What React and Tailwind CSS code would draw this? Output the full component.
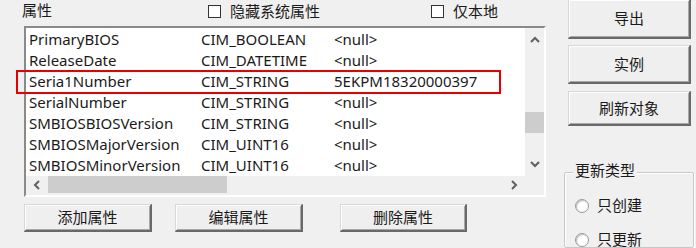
import React from "react";

const rows = [
    ["PrimaryBIOS", "CIM_BOOLEAN", "<null>"],
    ["ReleaseDate", "CIM_DATETIME", "<null>"],
    ["Seria1Number", "CIM_STRING", "5EKPM18320000397"],
    ["SerialNumber", "CIM_STRING", "<null>"],
    ["SMBIOSBIOSVersion", "CIM_STRING", "<null>"],
    ["SMBIOSMajorVersion", "CIM_UINT16", "<null>"],
    ["SMBIOSMinorVersion", "CIM_UINT16", "<null>"],
];

const font = "font-['Noto_Sans','Noto_Sans_CJK_SC',sans-serif]";

const WinButton = ({ className, children }) => (
    <div
        className={
            "flex items-center justify-center bg-[#efefef] border-t border-l border-t-[#d8d8d8] border-l-[#d8d8d8] border-r-2 border-b-2 border-r-[#696969] border-b-[#696969] shadow-[inset_1px_1px_0_#ffffff,inset_-1px_-1px_0_#a8a8a8] text-[15px] text-[#1a1a1a] " +
            className
        }
    >
        {children}
    </div>
);

const CheckBox = ({ label, className }) => (
    <div className={"flex items-center gap-[9px] " + className}>
        <div className="w-[13px] h-[13px] border border-[#333333] bg-white" />
        <span className="text-[15px] leading-none">{label}</span>
    </div>
);

const Radio = ({ label }) => (
    <div className="flex items-center gap-[8px]">
        <div className="w-[14px] h-[14px] rounded-full border border-[#9a9a9a] bg-white shadow-[inset_1px_1px_1px_#bdbdbd]" />
        <span className="text-[15px] leading-none">{label}</span>
    </div>
);

const Chevron = ({ dir }) => {
    const d = {
        up: "M1 6 L5 2 L9 6",
        down: "M1 2 L5 6 L9 2",
        left: "M6 1 L2 5 L6 9",
        right: "M2 1 L6 5 L2 9",
    }[dir];
    const vb = dir === "up" || dir === "down" ? "0 0 10 8" : "0 0 8 10";
    const size = dir === "up" || dir === "down" ? "w-[10px] h-[8px]" : "w-[8px] h-[10px]";
    return (
        <svg viewBox={vb} className={size}>
            <path d={d} fill="none" stroke="#606060" strokeWidth="2" />
        </svg>
    );
};

export default function App() {
    return (
        <div className={"relative w-[696px] h-[248px] overflow-hidden bg-[#f0f0f0] text-[#1a1a1a] flex " + font}>
            {/* left panel */}
            <div className="w-[564px] flex flex-col">
                <div className="h-[26px] flex items-center relative">
                    <span className="ml-[22px] text-[15px] leading-none -mt-[5px]">属性</span>
                    <CheckBox label="隐藏系统属性" className="ml-[156px] -mt-[4px]" />
                    <CheckBox label="仅本地" className="ml-[111px] -mt-[4px]" />
                </div>

                <div className="ml-[24px] w-[522px] h-[171px] border-2 border-t-[#8a8a8a] border-l-[#8a8a8a] border-r-white border-b-white flex flex-col">
                    <div className="flex h-[148px]">
                        <div className="flex-1 bg-white overflow-hidden pt-[1px]">
                            {rows.map((r) => (
                                <div key={r[0]} className="h-[21px] flex items-center text-[15px] whitespace-nowrap">
                                    <span className="w-[175px] pl-[3px]">{r[0]}</span>
                                    <span className="w-[133px]">{r[1]}</span>
                                    <span>{r[2]}</span>
                                </div>
                            ))}
                        </div>
                        <div className="w-[19px] bg-[#f0f0f0] flex flex-col items-center">
                            <div className="h-[24px] flex items-center justify-center">
                                <Chevron dir="up" />
                            </div>
                            <div className="h-[60px]" />
                            <div className="w-full h-[21px] bg-[#cdcdcd]" />
                            <div className="flex-1" />
                            <div className="h-[24px] flex items-center justify-center">
                                <Chevron dir="down" />
                            </div>
                        </div>
                    </div>
                    <div className="flex h-[17px]">
                        <div className="flex-1 bg-[#f0f0f0] flex items-center">
                            <div className="w-[22px] flex justify-center">
                                <Chevron dir="left" />
                            </div>
                            <div className="w-[179px] h-full bg-[#cdcdcd]" />
                            <div className="flex-1" />
                            <div className="w-[22px] flex justify-center">
                                <Chevron dir="right" />
                            </div>
                        </div>
                        <div className="w-[19px] bg-[#f0f0f0]" />
                    </div>
                </div>

                <div className="flex mt-[7px] ml-[24px]">
                    <WinButton className="w-[128px] h-[28px]">添加属性</WinButton>
                    <WinButton className="w-[128px] h-[28px] ml-[23px]">编辑属性</WinButton>
                    <WinButton className="w-[127px] h-[28px] ml-[37px]">删除属性</WinButton>
                </div>
            </div>

            {/* right panel */}
            <div className="flex-1 flex flex-col">
                <WinButton className="ml-[4px] w-[123px] h-[42px] -mt-[1px]">导出</WinButton>
                <WinButton className="ml-[4px] w-[123px] h-[42px] mt-[6px]">实例</WinButton>
                <WinButton className="ml-[4px] w-[123px] h-[37px] mt-[7px]">刷新对象</WinButton>

                <div className="relative mt-[46px] w-[130px] h-[80px] border border-[#c8c8c8] rounded-[2px] shadow-[1px_1px_0_#ffffff,inset_1px_1px_0_#ffffff]">
                    <span className="absolute -top-[10px] left-[8px] px-[2px] bg-[#f0f0f0] text-[15px] leading-none">更新类型</span>
                    <div className="pl-[10px] pt-[25px] flex flex-col gap-[19px]">
                        <Radio label="只创建" />
                        <Radio label="只更新" />
                    </div>
                </div>
            </div>

            {/* highlight annotation */}
            <div className="absolute left-[16px] top-[70px] w-[485px] h-[24px] border-2 border-[#e60000]" />
        </div>
    );
}
